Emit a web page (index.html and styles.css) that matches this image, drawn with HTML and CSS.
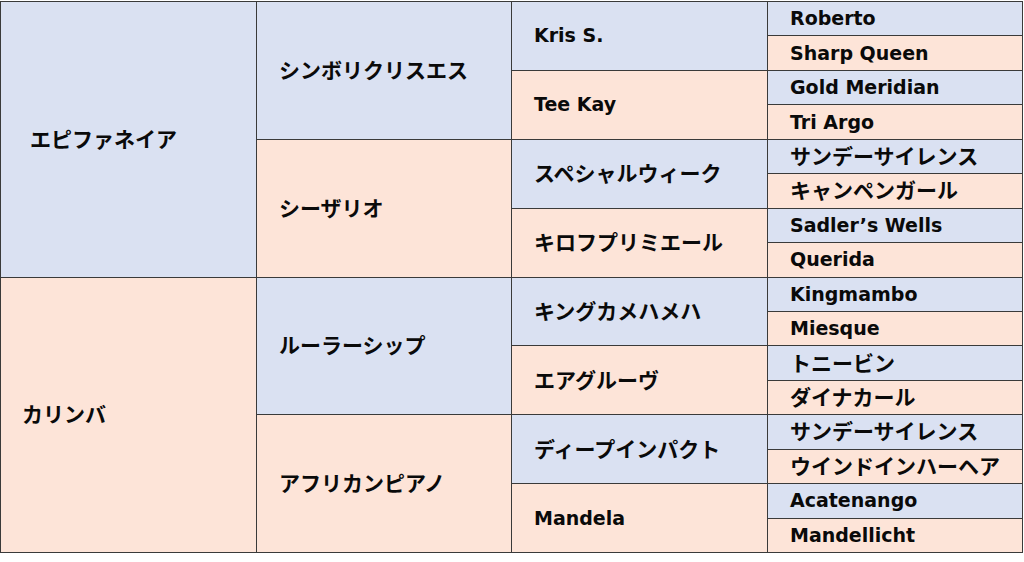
FILE: index.html
```html
<!DOCTYPE html>
<html lang="ja">
<head>
<meta charset="utf-8">
<link rel="stylesheet" href="styles.css">
<title>血統表</title>
</head>
<body>
<div class="ped">
  <div class="c g1 blue r1-8 first jp">エピファネイア</div>
  <div class="c g2 blue r1-4 jp">シンボリクリスエス</div>
  <div class="c g3 blue r1-2">Kris S.</div>
  <div class="c g4 blue">Roberto</div>
  <div class="c g4 peach">Sharp Queen</div>
  <div class="c g3 peach r3-4">Tee Kay</div>
  <div class="c g4 blue">Gold Meridian</div>
  <div class="c g4 peach">Tri Argo</div>
  <div class="c g2 peach r5-8 jp">シーザリオ</div>
  <div class="c g3 blue r5-6 jp">スペシャルウィーク</div>
  <div class="c g4 blue jp">サンデーサイレンス</div>
  <div class="c g4 peach jp">キャンペンガール</div>
  <div class="c g3 peach r7-8 jp">キロフプリミエール</div>
  <div class="c g4 blue">Sadler’s Wells</div>
  <div class="c g4 peach">Querida</div>

  <div class="c g1 peach r9-16 jp">カリンバ</div>
  <div class="c g2 blue r9-12 jp">ルーラーシップ</div>
  <div class="c g3 blue r9-10 jp">キングカメハメハ</div>
  <div class="c g4 blue">Kingmambo</div>
  <div class="c g4 peach">Miesque</div>
  <div class="c g3 peach r11-12 jp">エアグルーヴ</div>
  <div class="c g4 blue jp">トニービン</div>
  <div class="c g4 peach jp">ダイナカール</div>
  <div class="c g2 peach r13-16 jp">アフリカンピアノ</div>
  <div class="c g3 blue r13-14 jp">ディープインパクト</div>
  <div class="c g4 blue jp">サンデーサイレンス</div>
  <div class="c g4 peach jp">ウインドインハーヘア</div>
  <div class="c g3 peach r15-16">Mandela</div>
  <div class="c g4 blue">Acatenango</div>
  <div class="c g4 peach">Mandellicht</div>
</div>
</body>
</html>
```

FILE: styles.css
```css
html, body {
  margin: 0;
  padding: 0;
  background: #ffffff;
}

.ped {
  margin-top: 1px;
  width: 1023px;
  display: grid;
  grid-template-columns: 257px 255px 256px 255px;
  grid-template-rows: repeat(16, 34.4375px);
  grid-auto-flow: column dense;
  border-top: 1px solid #3a3a3a;
  box-sizing: content-box;
  font-family: "DejaVu Sans", "Noto Sans CJK JP", sans-serif;
  font-weight: bold;
  font-size: 19px;
  color: #0a0a0a;
}

.c {
  display: flex;
  align-items: center;
  padding-left: 22px;
  padding-bottom: 1px;
  border-right: 1px solid #3a3a3a;
  border-bottom: 1px solid #3a3a3a;
  white-space: nowrap;
  overflow: hidden;
  box-sizing: border-box;
}

.jp {
  font-family: "Noto Sans CJK JP", "DejaVu Sans", sans-serif;
  font-size: 21px;
  padding-bottom: 3px;
}

.g1 { grid-column: 1; border-left: 1px solid #3a3a3a; padding-left: 21px; }
.g2 { grid-column: 2; }
.g3 { grid-column: 3; }
.g4 { grid-column: 4; }

.g1.first { padding-left: 29px; }

.r1-8 { grid-row: 1 / span 8; }
.r9-16 { grid-row: 9 / span 8; }
.r1-4 { grid-row: 1 / span 4; }
.r5-8 { grid-row: 5 / span 4; }
.r9-12 { grid-row: 9 / span 4; }
.r13-16 { grid-row: 13 / span 4; }
.r1-2 { grid-row: 1 / span 2; }
.r3-4 { grid-row: 3 / span 2; }
.r5-6 { grid-row: 5 / span 2; }
.r7-8 { grid-row: 7 / span 2; }
.r9-10 { grid-row: 9 / span 2; }
.r11-12 { grid-row: 11 / span 2; }
.r13-14 { grid-row: 13 / span 2; }
.r15-16 { grid-row: 15 / span 2; }

.blue { background: #dae1f2; }
.peach { background: #fde4d8; }
```
